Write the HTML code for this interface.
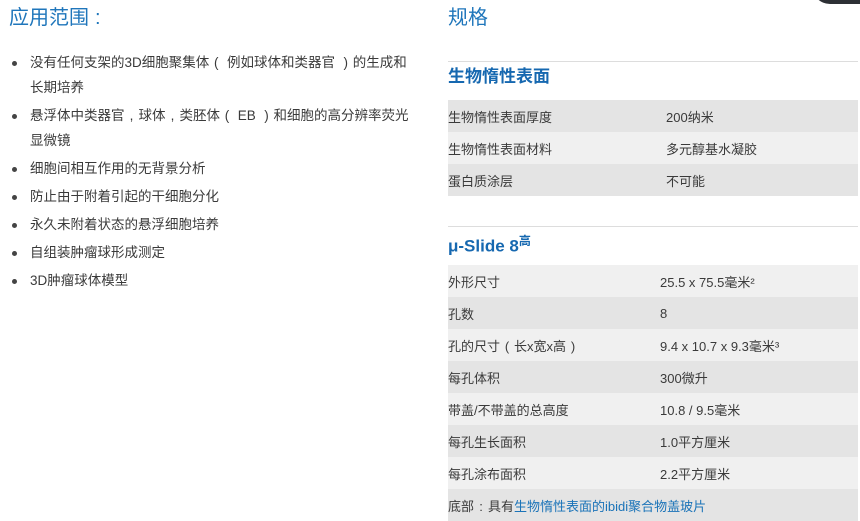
<!DOCTYPE html>
<html><head><meta charset="utf-8"><style>
body{margin:0;width:860px;height:516px;overflow:hidden;background:#fff;font-family:"Liberation Sans","Noto Sans CJK SC",sans-serif;color:#3a3a3a;position:relative}
.h{position:absolute;font-size:20px;color:#1f76bb;top:5px;line-height:26px}
ul{position:absolute;left:0;top:50px;margin:0;padding:0 0 0 30px;width:420px;font-size:13.5px;line-height:25px;white-space:nowrap}
li{margin-bottom:3px;list-style:none;position:relative}
li:before{content:"";position:absolute;left:-18px;top:11px;width:5px;height:5px;border-radius:50%;background:#444}
.p{display:inline-block;width:14px;text-align:center}
.hr{position:absolute;left:448px;width:410px;height:1px;background:#ddd}
.sub{position:absolute;left:448px;font-size:17px;font-weight:bold;color:#1668b0;line-height:22px}
table{position:absolute;left:448px;width:410px;border-collapse:collapse;font-size:13px}
td{height:32px;padding:0;vertical-align:middle}
tr.a td{background:#e4e4e4}tr.b td{background:#f0f0f0}
a{color:#1a73b8;text-decoration:none}
.corner{position:absolute;right:0;top:-20px;width:48px;height:24px;background:#2d3035;border-radius:0 0 0 18px}
</style></head><body>
<div class="corner"></div>
<div class="h" style="left:9px">应用范围<span style="margin-left:6px">:</span></div>
<ul>
<li>没有任何支架的3D细胞聚集体<span class="p">(</span> 例如球体和类器官 <span class="p">)</span>的生成和<br>长期培养</li>
<li>悬浮体中类器官<span class="p">,</span>球体<span class="p">,</span>类胚体<span class="p">(</span> EB <span class="p">)</span>和细胞的高分辨率荧光<br>显微镜</li>
<li>细胞间相互作用的无背景分析</li>
<li>防止由于附着引起的干细胞分化</li>
<li>永久未附着状态的悬浮细胞培养</li>
<li>自组装肿瘤球形成测定</li>
<li>3D肿瘤球体模型</li>
</ul>
<div class="h" style="left:448px">规格</div>
<div class="hr" style="top:61px"></div>
<div class="sub" style="top:66px">生物惰性表面</div>
<table style="top:100px">
<tr class="a"><td style="width:218px">生物惰性表面厚度</td><td>200纳米</td></tr>
<tr class="b"><td>生物惰性表面材料</td><td>多元醇基水凝胶</td></tr>
<tr class="a"><td>蛋白质涂层</td><td>不可能</td></tr>
</table>
<div class="hr" style="top:226px"></div>
<div class="sub" style="top:230px;font-weight:600">μ-Slide 8<sup style="font-size:12px">高</sup></div>
<table style="top:265px">
<tr class="b"><td style="width:212px">外形尺寸</td><td>25.5 x 75.5毫米²</td></tr>
<tr class="a"><td>孔数</td><td>8</td></tr>
<tr class="b"><td>孔的尺寸<span class="p">(</span>长x宽x高<span class="p">)</span></td><td>9.4 x 10.7 x 9.3毫米³</td></tr>
<tr class="a"><td>每孔体积</td><td>300微升</td></tr>
<tr class="b"><td>带盖/不带盖的总高度</td><td>10.8 / 9.5毫米</td></tr>
<tr class="a"><td>每孔生长面积</td><td>1.0平方厘米</td></tr>
<tr class="b"><td>每孔涂布面积</td><td>2.2平方厘米</td></tr>
<tr class="a"><td colspan="2">底部<span class="p">:</span>具有<a>生物惰性表面的</a><a>ibidi聚合物盖玻片</a></td></tr>
</table>
</body></html>
